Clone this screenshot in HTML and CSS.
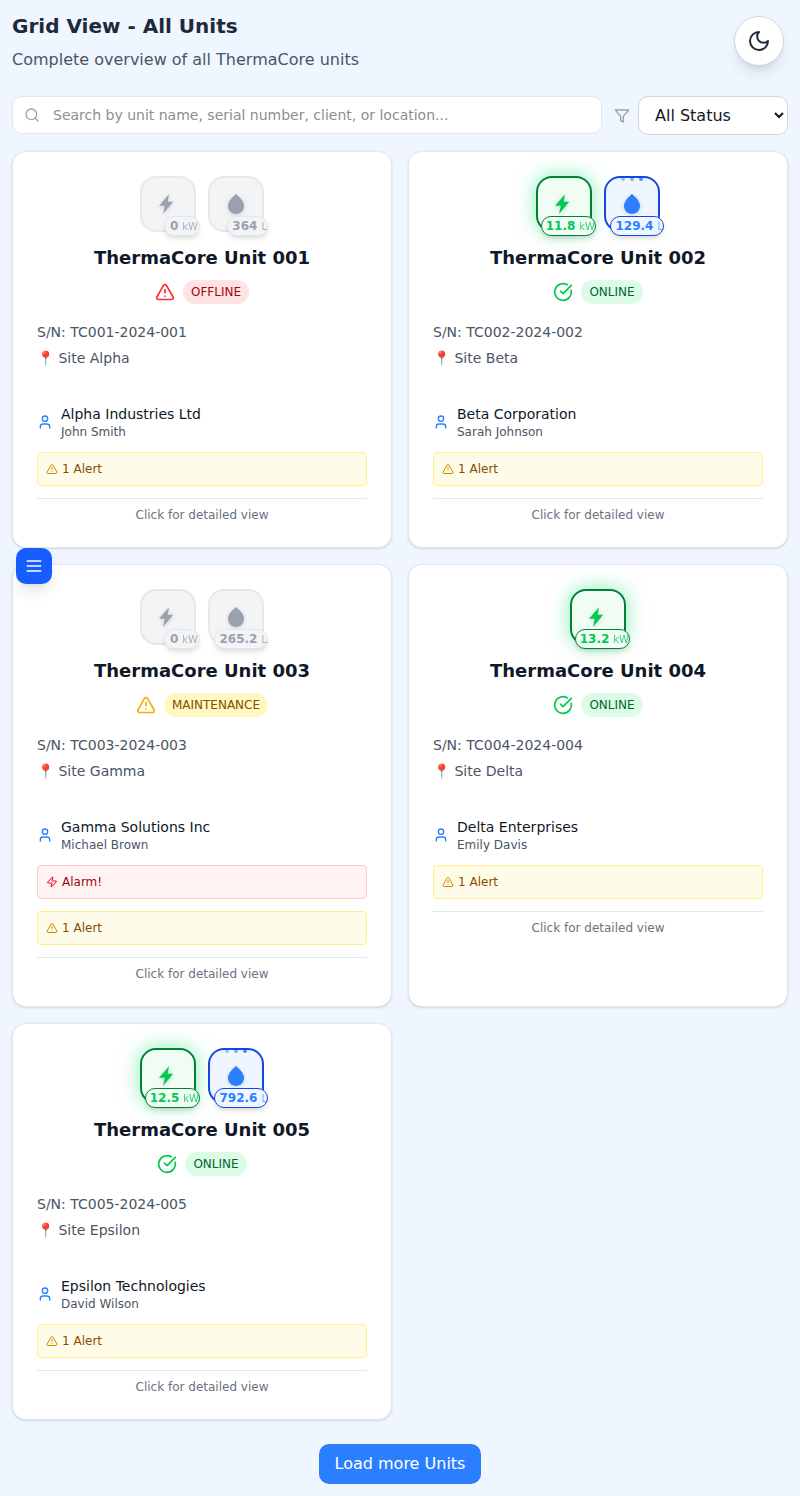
FILE: index.html
```html
<!DOCTYPE html>
<html lang="en">
<head>
<meta charset="utf-8">
<title>Grid View - All Units</title>
<link rel="stylesheet" href="styles.css">
</head>
<body>
<svg class="sprite" aria-hidden="true">
  <symbol id="triangle" viewBox="0 0 24 24"><path d="m21.73 18-8-14a2 2 0 0 0-3.48 0l-8 14A2 2 0 0 0 4 21h16a2 2 0 0 0 1.73-3"/><path d="M12 9v4"/><path d="M12 17h.01"/></symbol>
  <symbol id="check" viewBox="0 0 24 24"><path d="M21.801 10A10 10 0 1 1 17 3.335"/><path d="m9 11 3 3L22 4"/></symbol>
  <symbol id="user" viewBox="0 0 24 24"><path d="M19 21v-2a4 4 0 0 0-4-4H9a4 4 0 0 0-4 4v2"/><circle cx="12" cy="7" r="4"/></symbol>
  <symbol id="zap" viewBox="0 0 24 24"><path d="M4 14a1 1 0 0 1-.78-1.63l9.9-10.2a.5.5 0 0 1 .86.46l-1.92 6.02A1 1 0 0 0 13 10h7a1 1 0 0 1 .78 1.63l-9.9 10.2a.5.5 0 0 1-.86-.46l1.92-6.02A1 1 0 0 0 11 14z"/></symbol>
  <symbol id="bolt" viewBox="0 0 24 24"><path d="M13 2.300 3 13.800h5.800L7 22 17.200 9.800h-5.500z"/></symbol>
  <symbol id="drop" viewBox="0 0 24 24"><path d="M12 2c-5.330 4.550-8 8.480-8 11.800 0 4.980 3.800 8.200 8 8.200s8-3.220 8-8.200c0-3.320-2.670-7.250-8-11.800z"/></symbol>
</svg>
<main class="page">
  <header class="header">
    <div>
      <h1 class="title">Grid View - All Units</h1>
      <p class="subtitle">Complete overview of all ThermaCore units</p>
    </div>
    <button class="theme" aria-label="Toggle theme"><svg class="line" width="24" height="24" viewBox="0 0 24 24"><path d="M12 3a6 6 0 0 0 9 9 9 9 0 1 1-9-9Z"/></svg></button>
  </header>
  <div class="toolbar">
    <label class="search">
      <svg class="line" width="16" height="16" viewBox="0 0 24 24"><circle cx="11" cy="11" r="8"/><path d="m21 21-4.300-4.300"/></svg>
      <input class="search-input" type="text" placeholder="Search by unit name, serial number, client, or location...">
    </label>
    <svg class="line filter" width="16" height="16" viewBox="0 0 24 24"><path d="M22 3H2l8 9.460V19l4 2v-8.540z"/></svg>
    <select class="status-select"><option>All Status</option><option>Online</option><option>Offline</option><option>Maintenance</option></select>
  </div>
  <section class="grid">
    <article class="card">
      <div class="tiles">
        <div class="tile"><svg class="glyph"><use href="#bolt"/></svg><span class="badge idle">0<small>kW</small></span></div>
        <div class="tile"><svg class="glyph"><use href="#drop"/></svg><span class="badge">364<small>L</small></span></div>
      </div>
      <h3 class="name">ThermaCore Unit 001</h3>
      <div class="status offline"><svg class="line"><use href="#triangle"/></svg><span class="pill">OFFLINE</span></div>
      <p class="serial">S/N: TC001-2024-001</p>
      <p class="site">📍 Site Alpha</p>
      <div class="client"><svg class="line"><use href="#user"/></svg><div><p class="company">Alpha Industries Ltd</p><p class="person">John Smith</p></div></div>
      <div class="notice"><svg class="line"><use href="#triangle"/></svg><span>1 Alert</span></div>
      <p class="hint">Click for detailed view</p>
    </article>
    <article class="card">
      <div class="tiles">
        <div class="tile power"><svg class="glyph"><use href="#bolt"/></svg><span class="badge">11.8<small>kW</small></span></div>
        <div class="tile water"><span class="drips"><i></i><i></i><i></i></span><svg class="glyph"><use href="#drop"/></svg><span class="badge">129.4<small>L</small></span></div>
      </div>
      <h3 class="name">ThermaCore Unit 002</h3>
      <div class="status online"><svg class="line"><use href="#check"/></svg><span class="pill">ONLINE</span></div>
      <p class="serial">S/N: TC002-2024-002</p>
      <p class="site">📍 Site Beta</p>
      <div class="client"><svg class="line"><use href="#user"/></svg><div><p class="company">Beta Corporation</p><p class="person">Sarah Johnson</p></div></div>
      <div class="notice"><svg class="line"><use href="#triangle"/></svg><span>1 Alert</span></div>
      <p class="hint">Click for detailed view</p>
    </article>
    <article class="card">
      <div class="tiles">
        <div class="tile"><svg class="glyph"><use href="#bolt"/></svg><span class="badge idle">0<small>kW</small></span></div>
        <div class="tile"><svg class="glyph"><use href="#drop"/></svg><span class="badge">265.2<small>L</small></span></div>
      </div>
      <h3 class="name">ThermaCore Unit 003</h3>
      <div class="status maintenance"><svg class="line"><use href="#triangle"/></svg><span class="pill">MAINTENANCE</span></div>
      <p class="serial">S/N: TC003-2024-003</p>
      <p class="site">📍 Site Gamma</p>
      <div class="client"><svg class="line"><use href="#user"/></svg><div><p class="company">Gamma Solutions Inc</p><p class="person">Michael Brown</p></div></div>
      <div class="notice alarm"><svg class="line"><use href="#zap"/></svg><span>Alarm!</span></div>
      <div class="notice"><svg class="line"><use href="#triangle"/></svg><span>1 Alert</span></div>
      <p class="hint">Click for detailed view</p>
    </article>
    <article class="card">
      <div class="tiles">
        <div class="tile power"><svg class="glyph"><use href="#bolt"/></svg><span class="badge">13.2<small>kW</small></span></div>
      </div>
      <h3 class="name">ThermaCore Unit 004</h3>
      <div class="status online"><svg class="line"><use href="#check"/></svg><span class="pill">ONLINE</span></div>
      <p class="serial">S/N: TC004-2024-004</p>
      <p class="site">📍 Site Delta</p>
      <div class="client"><svg class="line"><use href="#user"/></svg><div><p class="company">Delta Enterprises</p><p class="person">Emily Davis</p></div></div>
      <div class="notice"><svg class="line"><use href="#triangle"/></svg><span>1 Alert</span></div>
      <p class="hint">Click for detailed view</p>
    </article>
    <article class="card">
      <div class="tiles">
        <div class="tile power"><svg class="glyph"><use href="#bolt"/></svg><span class="badge">12.5<small>kW</small></span></div>
        <div class="tile water"><span class="drips"><i></i><i></i><i></i></span><svg class="glyph"><use href="#drop"/></svg><span class="badge">792.6<small>L</small></span></div>
      </div>
      <h3 class="name">ThermaCore Unit 005</h3>
      <div class="status online"><svg class="line"><use href="#check"/></svg><span class="pill">ONLINE</span></div>
      <p class="serial">S/N: TC005-2024-005</p>
      <p class="site">📍 Site Epsilon</p>
      <div class="client"><svg class="line"><use href="#user"/></svg><div><p class="company">Epsilon Technologies</p><p class="person">David Wilson</p></div></div>
      <div class="notice"><svg class="line"><use href="#triangle"/></svg><span>1 Alert</span></div>
      <p class="hint">Click for detailed view</p>
    </article>
  </section>
  <button class="load-more">Load more Units</button>
</main>
<button class="menu" aria-label="Open menu"><svg class="line" width="20" height="20" viewBox="0 0 24 24"><path d="M4 6h16M4 12h16M4 18h16"/></svg></button>
</body>
</html>
```
FILE: styles.css
```css
* { box-sizing: border-box; margin: 0; }
body { background: #eff6ff; color: #101828; font-family: "DejaVu Sans", sans-serif; font-size: 16px; line-height: 24px; }
button, input, select { font: inherit; }
.sprite { position: absolute; width: 0; height: 0; }
.line { fill: none; stroke: currentColor; stroke-width: 2; stroke-linecap: round; stroke-linejoin: round; flex: none; display: block; }
.page { display: flex; flex-direction: column; padding: 12px; min-height: 1496px; }
.header { display: flex; justify-content: space-between; padding-right: 4px; height: 84px; }
.title { font-size: 20px; line-height: 28px; font-weight: 700; color: #1e2939; }
.subtitle { margin-top: 8px; color: #4a5565; }
.theme { width: 50px; height: 50px; margin-top: 4px; padding: 0; display: grid; place-items: center; border: 1px solid #d1d5dc; border-radius: 50%; background: #fff; color: #1e2939; box-shadow: 0 10px 15px -3px rgb(0 0 0 / .1), 0 4px 6px -4px rgb(0 0 0 / .1); }
.toolbar { display: flex; height: 39px; }
.search { flex: none; display: flex; align-items: center; width: 590px; height: 38px; padding-left: 11px; gap: 13px; background: #fff; border: 1px solid #e5e7eb; border-radius: 10px; color: #99a1af; }
.search-input { flex: 1; padding: 0; border: 0; outline: 0; background: transparent; font-size: 14px; line-height: 20px; }
.search-input::placeholder { color: #8b8e94; }
.filter { margin: 12px 8px 0 12px; color: #99a1af; }
.status-select { width: 150px; height: 39px; padding: 0 0 0 12px; border: 1px solid #d1d5dc; border-radius: 10px; background: #fff; color: #101828; }
.grid { display: grid; grid-template-columns: 1fr 1fr; gap: 16px; margin-top: 16px; }
.card { padding: 24px; background: #fff; border: 1px solid #e5e7eb; border-radius: 14px; box-shadow: 0 1px 3px rgb(0 0 0 / .1), 0 1px 2px -1px rgb(0 0 0 / .1); }
.tiles { display: flex; justify-content: center; gap: 12px; }
.tile { position: relative; display: grid; place-items: center; width: 56px; height: 56px; border: 2px solid #e5e7eb; border-radius: 16px; background: #f3f4f6; color: #99a1af; }
.glyph { display: block; width: 24px; height: 24px; fill: currentColor; filter: drop-shadow(0 1px 2px rgb(0 0 0 / .15)); }
.badge { position: absolute; right: -6px; bottom: -6px; height: 20px; padding: 0 0 0 4px; border: 1px solid #e5e7eb; border-radius: 10px; background: #f3f4f6; font-size: 12px; line-height: 18px; font-weight: 700; white-space: nowrap; box-shadow: 0 4px 6px -1px rgb(0 0 0 / .1), 0 2px 4px -2px rgb(0 0 0 / .1); }
.idle { padding: 0 1px 0 5px; }
.badge small { margin-left: 4px; font-size: 10px; font-weight: 400; opacity: .8; }
.power { border-color: #008236; background: #f0fdf4; color: #00c950; box-shadow: 0 0 20px rgb(5 223 114 / .5); }
.power .badge { border-color: #008236; background: #f0fdf4; }
.water { border-color: #1447e6; background: #eff6ff; color: #2b7fff; }
.water .badge { border-color: #1447e6; background: #eff6ff; }
.water .badge small { opacity: .65; }
.drips { position: absolute; top: 0; left: 15px; display: flex; gap: 5px; }
.drips i { width: 4px; height: 3px; border-radius: 1px 1px 2px 2px; background: #8ec5ff; }
.drips i:nth-child(2) { background: #6db3ff; }
.drips i:nth-child(3) { background: #3f8eff; }
.name { margin-top: 12px; text-align: center; font-size: 18px; line-height: 28px; font-weight: 700; }
.status { display: flex; align-items: center; justify-content: center; gap: 8px; margin-top: 8px; font-size: 12px; line-height: 16px; }
.status .line { width: 20px; height: 20px; }
.pill { padding: 4px 8px; border-radius: 12px; }
.offline { color: #fb2c36; }
.offline .pill { color: #9f0712; background: #ffe2e2; }
.online { color: #00c950; }
.online .pill { color: #016630; background: #dcfce7; }
.maintenance { color: #f0b100; }
.maintenance .pill { color: #894b00; background: #fef9c2; }
.serial, .site { font-size: 14px; line-height: 20px; color: #4a5565; }
.serial { margin-top: 18px; }
.site { margin-top: 6px; }
.client { display: flex; align-items: center; gap: 8px; margin-top: 36px; }
.client .line { width: 16px; height: 16px; color: #2b7fff; }
.company { font-size: 14px; line-height: 20px; }
.person { font-size: 12px; line-height: 16px; color: #4a5565; }
.notice { display: flex; align-items: center; gap: 4px; height: 34px; margin-top: 12px; padding: 0 8px; border: 1px solid #fff085; border-radius: 4px; background: #fefce8; color: #894b00; font-size: 12px; line-height: 16px; }
.notice .line { width: 12px; height: 12px; color: #d08700; }
.alarm { border-color: #ffc9c9; background: #fef2f2; color: #9f0712; }
.alarm .line { color: #e7000b; }
.hint { margin-top: 12px; padding-top: 8px; border-top: 1px solid #e5e7eb; color: #6a7282; text-align: center; font-size: 12px; line-height: 16px; }
.load-more { align-self: center; margin-top: 24px; height: 40px; padding: 0 16px; border: 0; border-radius: 10px; background: #2b7fff; color: #fff; }
.menu { position: fixed; left: 16px; top: 548px; width: 36px; height: 36px; padding: 8px; border: 0; border-radius: 10px; background: #155dfc; color: #fff; box-shadow: 0 10px 15px -3px rgb(0 0 0 / .1), 0 4px 6px -4px rgb(0 0 0 / .1); }
```
